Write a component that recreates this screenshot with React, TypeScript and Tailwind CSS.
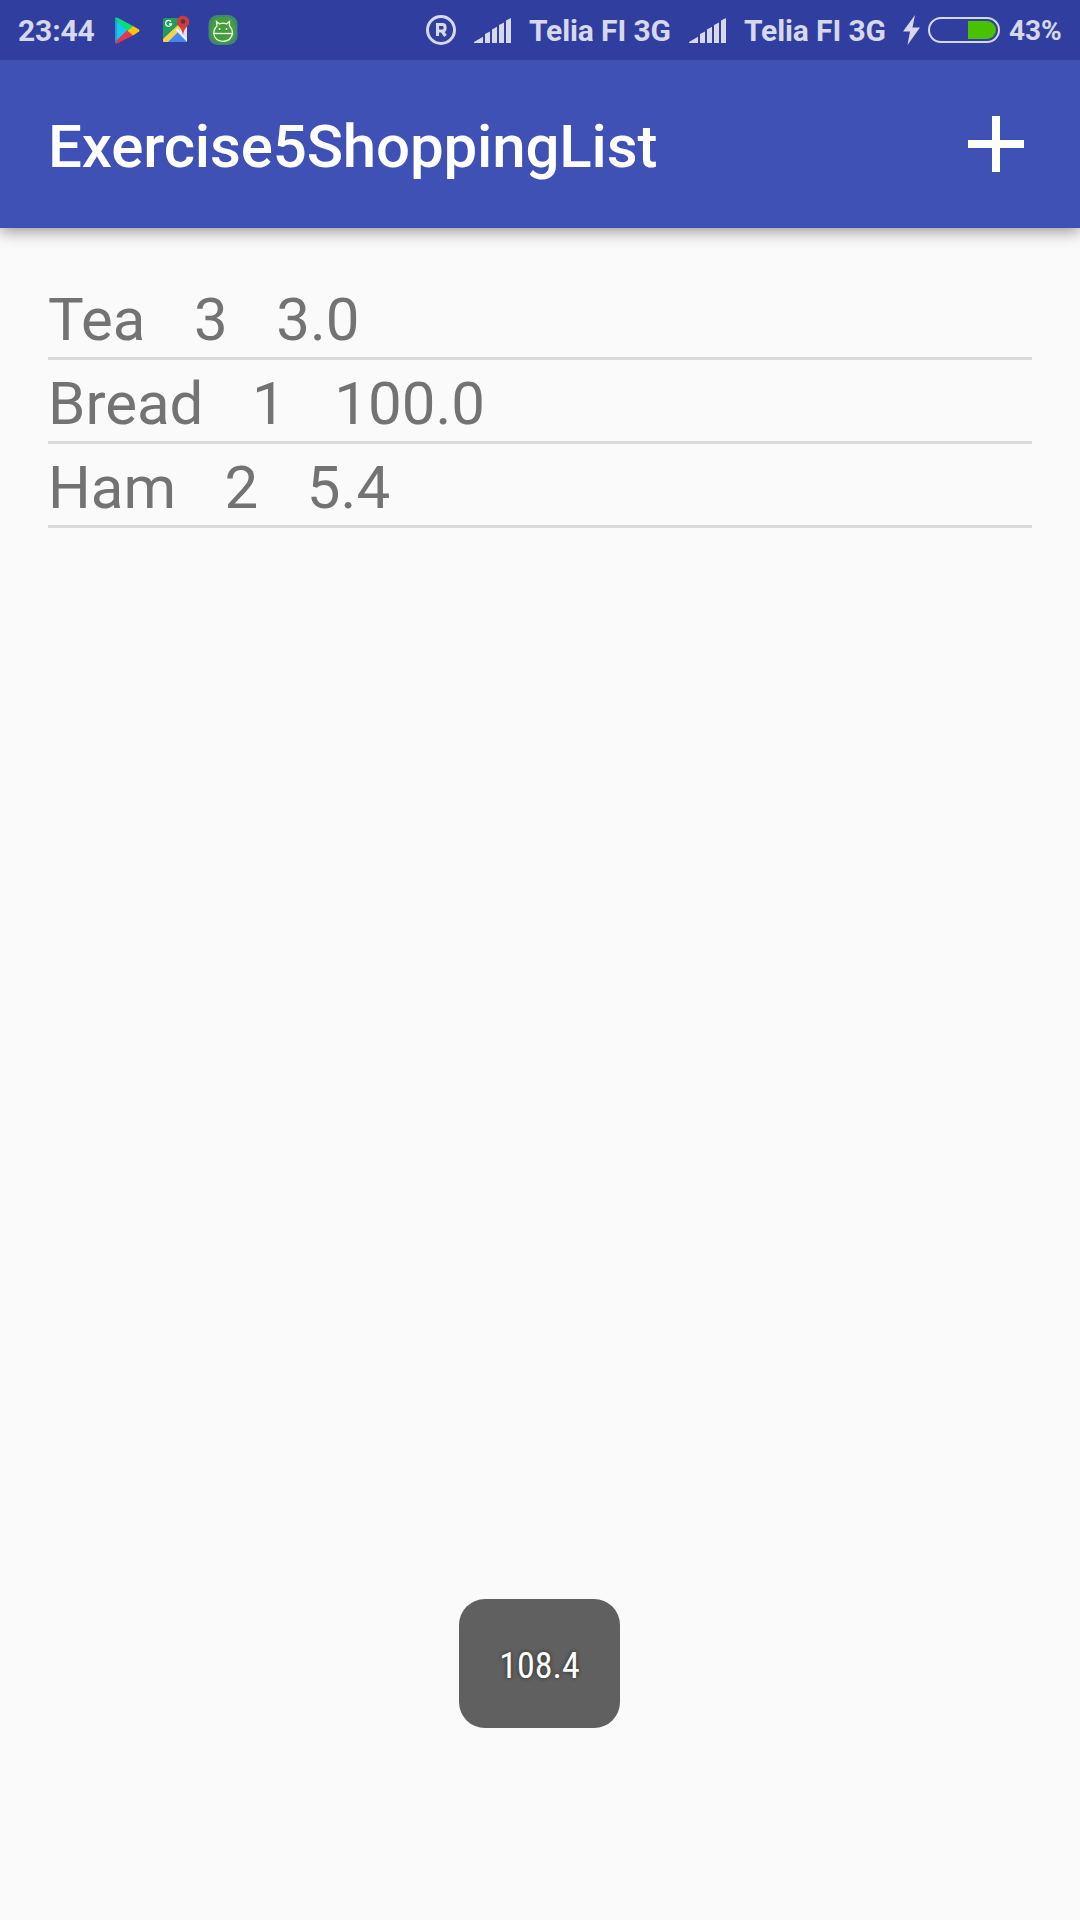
import React from "react";

const items = [
  { name: "Tea", count: 3, price: "3.0" },
  { name: "Bread", count: 1, price: "100.0" },
  { name: "Ham", count: 2, price: "5.4" },
];

function PlayIcon() {
  return (
    <svg className="ml-[22px] h-[27px] w-[25px]" viewBox="0 0 25 27">
      <path d="M0 2V25L13 13.5Z" fill="#15c7f5" />
      <path d="M0 1Q1 0 3 1L18 9L12.500 14L0 2Z" fill="#08dc7c" />
      <path d="M0 25L12.500 13L18 18.500L3 26Q1 27 0 26Z" fill="#e9344c" />
      <path d="M18 9L24 12.500Q25 13.500 24 14.500L18 18.500L12.500 13.700Z" fill="#fcc40a" />
      <path d="M0 1V26L2 24.500V2.500Z" fill="#2a8fb8" opacity=".7" />
    </svg>
  );
}

function MapsIcon() {
  return (
    <svg className="mr-px mb-[2px] ml-[22px] h-[28px] w-[27px]" viewBox="0 0 27 28">
      <rect x="1" y="3" width="24" height="24" rx="1.5" fill="#209d5a" />
      <path d="M25 12V25L13 14L18 10Z" fill="#dddfe7" />
      <path d="M13.500 15L25 27H2Z" fill="#4285f4" />
      <path d="M1 24L17 9L20 13L6 27H2Q1 27 1 26Z" fill="#f6d04f" />
      <path d="M13.500 15L15.500 13L25 24V27Z" fill="#edf0fa" />
      <path d="M9 6.500A3 3 0 1 0 9.500 9H7" fill="none" stroke="#fff" strokeWidth="1.3" />
      <path d="M21 20Q20 14 16 10.500A6.200 6.200 0 1 1 26 10.500Q22 14 21 20Z" fill="#db4437" />
      <circle cx="21" cy="6.500" r="6" fill="#a53860" opacity=".4" />
      <circle cx="21" cy="6.500" r="2.300" fill="#762927" />
    </svg>
  );
}

function AndroidIcon() {
  return (
    <svg className="ml-[18px] h-[30px] w-[30px]" viewBox="0 0 30 30">
      <rect x=".5" width="29" height="30" rx="9" fill="#438573" />
      <rect x="2.500" y="2" width="25" height="26" rx="10" fill="#429f3a" />
      <path d="M6 18.500H24" stroke="#fff" strokeWidth="1.300" />
      <path d="M9 11L8.500 6.500L11.500 9Q15 7.300 18.500 9L21.500 6.500L21.500 11Q24.500 14 24.500 18.500Q23 26 15 26.300Q7 26 5.700 18.500Q5.700 14 9 11Z" fill="none" stroke="#f0f8ee" strokeWidth="1.300" />
      <circle cx="11.500" cy="14" r="1" fill="#fff" />
      <circle cx="18.500" cy="14" r="1" fill="#fff" />
    </svg>
  );
}

function Signal() {
  return (
    <svg className="h-[25px] w-[37px] shrink-0" viewBox="0 0 37 25" fill="#d6d8ec">
      <path d="M0 24L9 18.700V25H0ZM11 16L16 13.500V25H11ZM18 11.500L23 8.700V25H18ZM25 7L30 4.500V25H25ZM32 2.500L37 0V25H32Z" />
    </svg>
  );
}

function StatusBar() {
  return (
    <div className="z-10 flex h-[60px] shrink-0 items-center bg-[#303f9f] pr-[16px] pl-[18px] text-[30px] font-bold tracking-[-0.12px] text-[#d6d8ec]">
      <span className="w-[75px] whitespace-nowrap">23:44</span>
      <PlayIcon />
      <MapsIcon />
      <AndroidIcon />
      <svg className="ml-[188px] h-[30px] w-[30px] shrink-0" viewBox="0 0 30 30" fill="none" stroke="#d6d8ec">
        <circle cx="15" cy="15" r="13.500" strokeWidth="3" />
        <path d="M11.500 21V9.500H16.500Q19 9.500 19 12V13.500Q19 16 16.500 16H12M16 16L19.500 21" strokeWidth="3.100" />
      </svg>
      <div className="ml-[18px] flex"><Signal /></div>
      <span className="ml-[18px] w-[142px] whitespace-nowrap">Telia FI 3G</span>
      <div className="ml-[18px] flex"><Signal /></div>
      <span className="ml-[18px] w-[142px] whitespace-nowrap">Telia FI 3G</span>
      <svg className="ml-[17px] h-[30px] w-[17px] shrink-0" viewBox="0 0 17 30">
        <path d="M12 0L0 16.500H7L4.500 30L17 12.500H9.500Z" fill="#d6d8ec" />
      </svg>
      <div className="ml-[8px] flex h-[26px] w-[72px] shrink-0 justify-end rounded-full border-2 border-[#d6d8ec] p-[2px]">
        <div className="h-[18px] w-[28px] rounded-r-full bg-[#48c200]" />
      </div>
      <span className="ml-[9px] pt-[2px] whitespace-nowrap text-[28px]">43%</span>
    </div>
  );
}

export default function App() {
  return (
    <div className="relative flex h-[1920px] w-[1080px] flex-col overflow-hidden bg-[#fafafa] font-['Roboto',sans-serif]">
      <StatusBar />
      <header className="flex h-[168px] shrink-0 items-center justify-between bg-[#3f51b5] pr-[56px] pl-[48px] text-white shadow-[0_4px_14px_rgba(0,0,0,0.38)]">
        <h1 className="pt-[6px] text-[60px] leading-[70px] font-medium tracking-[-0.15px]">Exercise5ShoppingList</h1>
        <svg className="h-[56px] w-[56px]" viewBox="0 0 56 56" fill="white">
          <path d="M24 0H32V24H56V32H32V56H24V32H0V24H24Z" />
        </svg>
      </header>
      <main className="px-12 pt-12">
        {items.map((item) => (
          <div key={item.name} className="h-[84px] border-b-3 border-[#dadada] pt-[6px] text-[60px] leading-[75px] whitespace-pre text-[#737373] [word-spacing:1.3px]">
            {`${item.name}   ${item.count}   ${item.price}`}
          </div>
        ))}
      </main>
      <div className="absolute top-[1599px] left-[459px] flex h-[129px] w-[161px] items-center justify-center rounded-[26px] bg-[#606060] pt-[4px] text-[36px] text-white [font-stretch:75%] [text-shadow:0_0_4px_rgba(0,0,0,0.6)]">
        108.4
      </div>
    </div>
  );
}
